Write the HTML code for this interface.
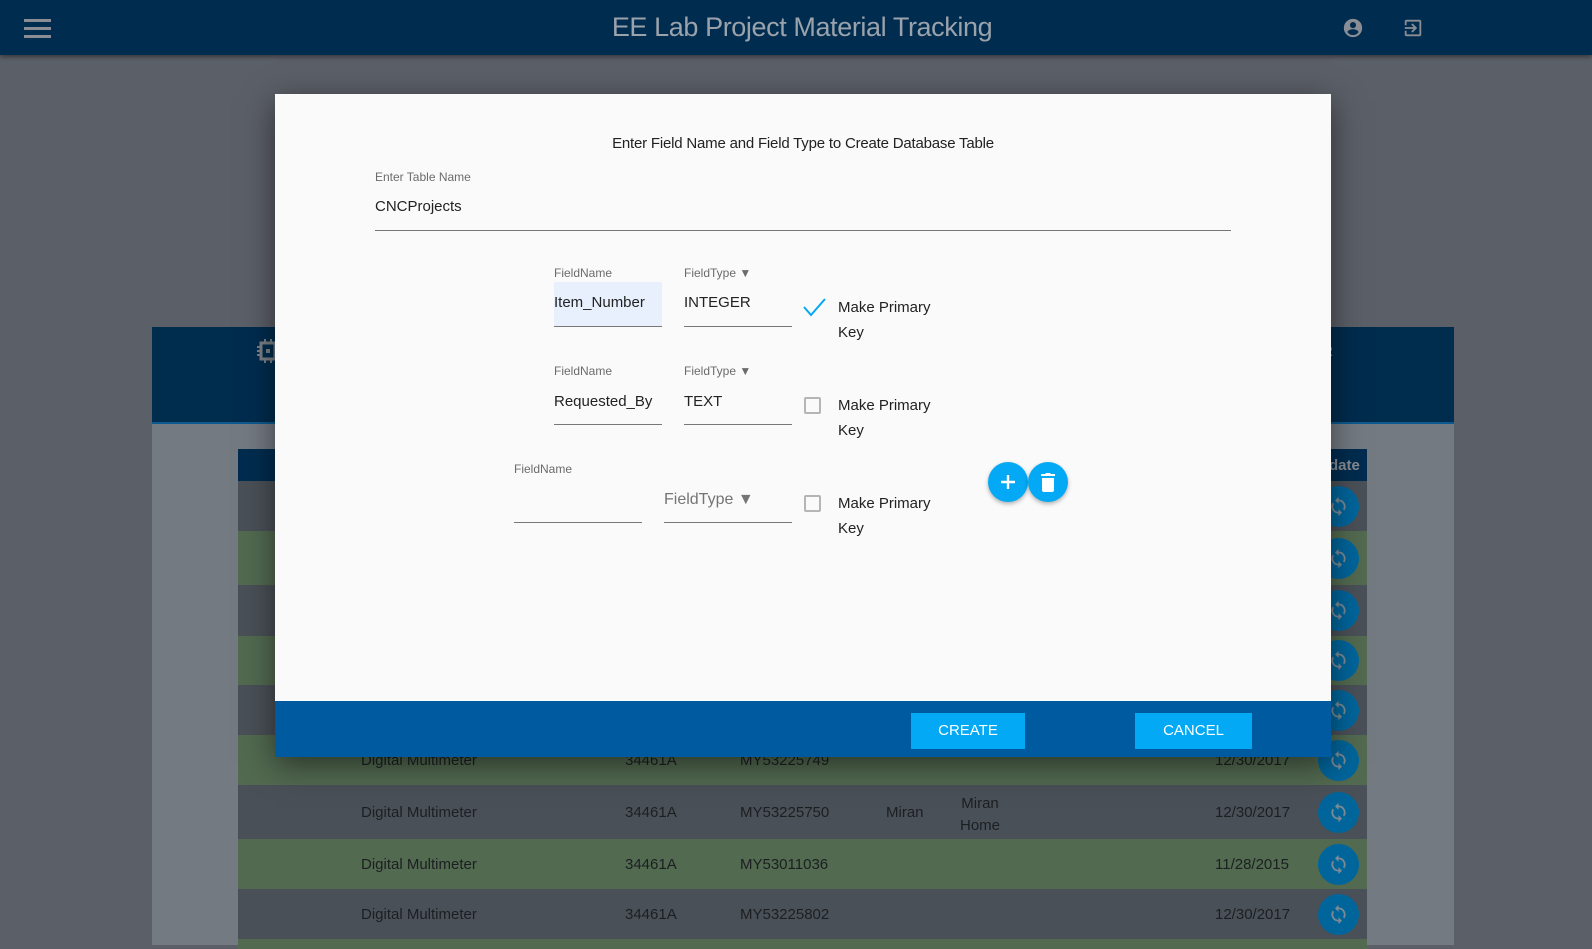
<!DOCTYPE html>
<html><head><meta charset="utf-8"><style>
*{margin:0;padding:0;box-sizing:border-box}
body{width:1592px;height:945px;overflow:hidden;background:#5b5f67;font-family:"Liberation Sans",sans-serif;position:relative}
.a{position:absolute}
.hdr{left:0;top:0;width:1592px;height:55px;background:#002c50;box-shadow:0 2px 4px rgba(0,0,0,.4)}
.hb{left:24px;width:27px;height:3px;background:#8a8e94}
.row{left:238px;width:1129px}
.rt{color:#1c1f22;font-size:15px}
.rb{left:1318px;width:41px;height:41px;border-radius:50%;background:#00659b}
.rb svg{position:absolute;left:10px;top:10px}
.modal{left:275px;top:94px;width:1056px;height:663px;background:#fafafa;box-shadow:0 8px 30px rgba(0,0,0,.5)}
.lbl{font-size:12px;color:#6b6b6b}
.val{font-size:15px;color:#222}
.ul{height:1px;background:#777}
.cb{width:17px;height:17px;border:2px solid #b5b5b5;border-radius:2px}
.mp{font-size:15px;color:#222;line-height:25px}
.btn{height:36px;background:#03a9f4;color:#fff;font-size:15px;text-align:center;line-height:36px}
.fab{width:40px;height:40px;border-radius:50%;background:#03a9f4;box-shadow:0 2px 4px rgba(0,0,0,.3)}
</style></head><body>
<div class="a hdr"></div>
<div class="a hb" style="top:19px"></div><div class="a hb" style="top:27px"></div><div class="a hb" style="top:35px"></div>
<div class="a" style="left:0;width:1604px;top:12px;text-align:center;font-size:27px;color:#9aa2ab;letter-spacing:-0.4px">EE Lab Project Material Tracking</div>
<svg class="a" style="left:1342px;top:17px" width="22" height="22" viewBox="0 0 24 24"><path fill="#8a8e94" d="M12 2a10 10 0 1 0 0 20 10 10 0 0 0 0-20zm0 3.5a3.3 3.3 0 1 1 0 6.6 3.3 3.3 0 0 1 0-6.6zm0 14.2a7.3 7.3 0 0 1-6-3.2c0-2 4-3.1 6-3.1s6 1.1 6 3.1a7.3 7.3 0 0 1-6 3.2z"/></svg>
<svg class="a" style="left:1402px;top:17px" width="22" height="22" viewBox="0 0 24 24"><path fill="#8a8e94" d="M10.1 15.6 11.5 17l5-5-5-5-1.4 1.4 2.6 2.6H3v2h9.7l-2.6 2.6zM19 3H5a2 2 0 0 0-2 2v4h2V5h14v14H5v-4H3v4a2 2 0 0 0 2 2h14a2 2 0 0 0 2-2V5a2 2 0 0 0-2-2z"/></svg>

<div class="a" style="left:152px;top:327px;width:1302px;height:618px;background:#737a81"></div>
<div class="a" style="left:152px;top:327px;width:1302px;height:97px;background:#002c4e;border-bottom:2px solid #0b5a8f"></div>
<svg class="a" style="left:257px;top:339px" width="22" height="24" viewBox="0 0 22 24"><rect x="4" y="4" width="14" height="16" fill="none" stroke="#7d8185" stroke-width="3"/><rect x="9" y="10" width="4" height="4" fill="#7d8185"/><path d="M0 8h4M0 12h4M0 16h4M8 0v4M14 0v4M8 20v4M14 20v4" stroke="#7d8185" stroke-width="2"/></svg>
<div class="a" style="left:1322px;top:343px;font-size:15px;color:#7d8185;font-weight:bold">R</div>
<div class="a row" style="top:449px;height:32px;background:#002c4f"></div>
<div class="a" style="left:1329px;top:457px;font-size:15px;font-weight:bold;color:#8a8e94">date</div>
<div class="a row" style="top:481px;height:50px;background:#4a5057"></div>
<div class="a row" style="top:531px;height:54px;background:#526a50"></div>
<div class="a row" style="top:585px;height:51px;background:#4a5057"></div>
<div class="a row" style="top:636px;height:49px;background:#526a50"></div>
<div class="a row" style="top:685px;height:50px;background:#4a5057"></div>
<div class="a row" style="top:735px;height:50px;background:#526a50"></div>
<div class="a row" style="top:785px;height:54px;background:#4a5057"></div>
<div class="a row" style="top:839px;height:50px;background:#526a50"></div>
<div class="a row" style="top:889px;height:50px;background:#4a5057"></div>
<div class="a row" style="top:939px;height:10px;background:#526a50"></div>
<div class="a rb" style="top:486px"><svg width="21" height="21" viewBox="0 0 24 24"><path fill="#7d8a93" d="M12 4V1L8 5l4 4V6a6 6 0 0 1 5.2 9l1.5 1.5A8 8 0 0 0 12 4zm0 14a6 6 0 0 1-5.2-9L5.3 7.5A8 8 0 0 0 12 20v3l4-4-4-4z"/></svg></div>
<div class="a rb" style="top:538px"><svg width="21" height="21" viewBox="0 0 24 24"><path fill="#7d8a93" d="M12 4V1L8 5l4 4V6a6 6 0 0 1 5.2 9l1.5 1.5A8 8 0 0 0 12 4zm0 14a6 6 0 0 1-5.2-9L5.3 7.5A8 8 0 0 0 12 20v3l4-4-4-4z"/></svg></div>
<div class="a rb" style="top:590px"><svg width="21" height="21" viewBox="0 0 24 24"><path fill="#7d8a93" d="M12 4V1L8 5l4 4V6a6 6 0 0 1 5.2 9l1.5 1.5A8 8 0 0 0 12 4zm0 14a6 6 0 0 1-5.2-9L5.3 7.5A8 8 0 0 0 12 20v3l4-4-4-4z"/></svg></div>
<div class="a rb" style="top:640px"><svg width="21" height="21" viewBox="0 0 24 24"><path fill="#7d8a93" d="M12 4V1L8 5l4 4V6a6 6 0 0 1 5.2 9l1.5 1.5A8 8 0 0 0 12 4zm0 14a6 6 0 0 1-5.2-9L5.3 7.5A8 8 0 0 0 12 20v3l4-4-4-4z"/></svg></div>
<div class="a rb" style="top:690px"><svg width="21" height="21" viewBox="0 0 24 24"><path fill="#7d8a93" d="M12 4V1L8 5l4 4V6a6 6 0 0 1 5.2 9l1.5 1.5A8 8 0 0 0 12 4zm0 14a6 6 0 0 1-5.2-9L5.3 7.5A8 8 0 0 0 12 20v3l4-4-4-4z"/></svg></div>
<div class="a rb" style="top:740px"><svg width="21" height="21" viewBox="0 0 24 24"><path fill="#7d8a93" d="M12 4V1L8 5l4 4V6a6 6 0 0 1 5.2 9l1.5 1.5A8 8 0 0 0 12 4zm0 14a6 6 0 0 1-5.2-9L5.3 7.5A8 8 0 0 0 12 20v3l4-4-4-4z"/></svg></div>
<div class="a rb" style="top:792px"><svg width="21" height="21" viewBox="0 0 24 24"><path fill="#7d8a93" d="M12 4V1L8 5l4 4V6a6 6 0 0 1 5.2 9l1.5 1.5A8 8 0 0 0 12 4zm0 14a6 6 0 0 1-5.2-9L5.3 7.5A8 8 0 0 0 12 20v3l4-4-4-4z"/></svg></div>
<div class="a rb" style="top:844px"><svg width="21" height="21" viewBox="0 0 24 24"><path fill="#7d8a93" d="M12 4V1L8 5l4 4V6a6 6 0 0 1 5.2 9l1.5 1.5A8 8 0 0 0 12 4zm0 14a6 6 0 0 1-5.2-9L5.3 7.5A8 8 0 0 0 12 20v3l4-4-4-4z"/></svg></div>
<div class="a rb" style="top:894px"><svg width="21" height="21" viewBox="0 0 24 24"><path fill="#7d8a93" d="M12 4V1L8 5l4 4V6a6 6 0 0 1 5.2 9l1.5 1.5A8 8 0 0 0 12 4zm0 14a6 6 0 0 1-5.2-9L5.3 7.5A8 8 0 0 0 12 20v3l4-4-4-4z"/></svg></div>
<div class="a rt" style="left:361px;top:752px">Digital Multimeter</div><div class="a rt" style="left:625px;top:752px">34461A</div><div class="a rt" style="left:740px;top:752px">MY53225749</div><div class="a rt" style="left:1215px;top:752px">12/30/2017</div>
<div class="a rt" style="left:361px;top:804px">Digital Multimeter</div><div class="a rt" style="left:625px;top:804px">34461A</div><div class="a rt" style="left:740px;top:804px">MY53225750</div><div class="a rt" style="left:886px;top:804px">Miran</div><div class="a rt" style="left:960px;top:793px;text-align:center;line-height:22px">Miran<br>Home</div><div class="a rt" style="left:1215px;top:804px">12/30/2017</div>
<div class="a rt" style="left:361px;top:856px">Digital Multimeter</div><div class="a rt" style="left:625px;top:856px">34461A</div><div class="a rt" style="left:740px;top:856px">MY53011036</div><div class="a rt" style="left:1215px;top:856px">11/28/2015</div>
<div class="a rt" style="left:361px;top:906px">Digital Multimeter</div><div class="a rt" style="left:625px;top:906px">34461A</div><div class="a rt" style="left:740px;top:906px">MY53225802</div><div class="a rt" style="left:1215px;top:906px">12/30/2017</div>

<div class="a modal"></div>
<div class="a" style="left:275px;top:701px;width:1056px;height:56px;background:#005a9f"></div>
<div class="a val" style="left:275px;width:1056px;top:135px;text-align:center;letter-spacing:-0.2px">Enter Field Name and Field Type to Create Database Table</div>
<div class="a lbl" style="left:375px;top:170px">Enter Table Name</div>
<div class="a val" style="left:375px;top:198px">CNCProjects</div>
<div class="a ul" style="left:375px;top:230px;width:856px"></div>

<div class="a lbl" style="left:554px;top:266px">FieldName</div>
<div class="a" style="left:554px;top:282px;width:108px;height:45px;background:#e8f0fe"></div>
<div class="a val" style="left:554px;top:294px">Item_Number</div>
<div class="a ul" style="left:554px;top:326px;width:108px"></div>
<div class="a lbl" style="left:684px;top:266px">FieldType ▼</div>
<div class="a val" style="left:684px;top:294px">INTEGER</div>
<div class="a ul" style="left:684px;top:326px;width:108px"></div>
<svg class="a" style="left:802px;top:297px" width="25" height="20"><path d="M2 10l7 8L23 2" fill="none" stroke="#03a9f4" stroke-width="2"/></svg>
<div class="a mp" style="left:838px;top:295px">Make Primary<br>Key</div>

<div class="a lbl" style="left:554px;top:364px">FieldName</div>
<div class="a val" style="left:554px;top:393px">Requested_By</div>
<div class="a ul" style="left:554px;top:424px;width:108px"></div>
<div class="a lbl" style="left:684px;top:364px">FieldType ▼</div>
<div class="a val" style="left:684px;top:393px">TEXT</div>
<div class="a ul" style="left:684px;top:424px;width:108px"></div>
<div class="a cb" style="left:804px;top:397px"></div>
<div class="a mp" style="left:838px;top:393px">Make Primary<br>Key</div>

<div class="a lbl" style="left:514px;top:462px">FieldName</div>
<div class="a ul" style="left:514px;top:522px;width:128px"></div>
<div class="a" style="left:664px;top:491px;font-size:16px;color:#757575">FieldType ▼</div>
<div class="a ul" style="left:664px;top:522px;width:128px"></div>
<div class="a cb" style="left:804px;top:495px"></div>
<div class="a mp" style="left:838px;top:491px">Make Primary<br>Key</div>

<div class="a fab" style="left:988px;top:462px"></div>
<div class="a fab" style="left:1028px;top:462px"></div>
<svg class="a" style="left:998px;top:472px" width="20" height="20"><path d="M10 3v14M3 10h14" stroke="#fff" stroke-width="2.4"/></svg>
<svg class="a" style="left:1039px;top:472px" width="18" height="20" viewBox="0 0 18 20"><path fill="#fff" d="M3 6h12v12a2 2 0 0 1-2 2H5a2 2 0 0 1-2-2zM2 2h4l1-1h4l1 1h4v2H2z"/></svg>

<div class="a btn" style="left:911px;top:713px;width:114px">CREATE</div>
<div class="a btn" style="left:1135px;top:713px;width:117px">CANCEL</div>
</body></html>
